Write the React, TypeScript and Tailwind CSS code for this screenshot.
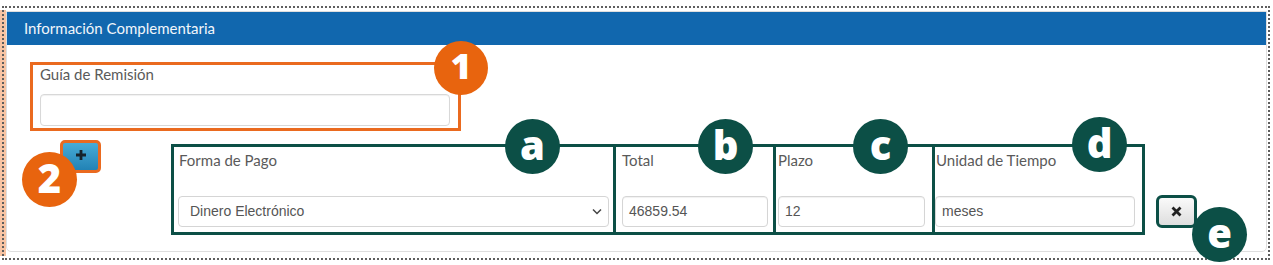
import React from "react";

const ORANGE = "bg-[#e8640e]";
const GREEN = "bg-[#0c4f46]";

function Badge({ label, x, y, color, size = 55, fs = "text-[40px]" }: { label: string; x: number; y: number; color: string; size?: number; fs?: string }) {
  return (
    <div
      className={`absolute rounded-full flex items-center justify-center text-white font-extrabold font-['Open_Sans',sans-serif] leading-none ${color} ${fs}`}
      style={{ left: x, top: y, width: size, height: size }}
    >
      <span className="-mt-[4px]">{label}</span>
    </div>
  );
}

function Field({ value, w }: { value: string; w: number }) {
  return (
    <div
      className="h-[31px] rounded-[4px] border border-[#d5d5d5] bg-white shadow-[inset_0_1px_1px_rgba(0,0,0,0.06)] flex items-center pl-[6px] text-[14px] text-[#555] font-['Liberation_Sans',sans-serif]"
      style={{ width: w }}
    >
      {value}
    </div>
  );
}

export default function App() {
  return (
    <div className="relative w-[1273px] h-[265px] bg-white overflow-hidden font-['Lato',sans-serif]">
      <div className="absolute left-0 top-[10px] w-[6px] h-[246px] bg-[#f8c4a3]" />
      <div className="relative ml-[2px] mt-[6px] w-[1268px] h-[254px] border-2 border-dotted border-[#5e5e5e]">
        <div className="ml-[2px] mt-[3px] w-[1261px] h-[241px] border border-[#dedede] rounded-b-[5px]">
          <div className="h-[33px] bg-[#1167ae] flex items-center pl-[17px] text-[#f2f6fb] text-[15px]">
            Información Complementaria
          </div>
          <div className="ml-[23px] mt-[17px] w-[431px] h-[69px] border-[3px] border-[#ea6a1f] pl-[7px] pt-[1px]">
            <div className="h-[16px] leading-[16px] text-[15px] text-[#5a5a5a]">Guía de Remisión</div>
            <div className="mt-[12px] w-[410px] h-[32px] rounded-[4px] border border-[#d8d8d8] bg-white shadow-[inset_0_1px_1px_rgba(0,0,0,0.06)]" />
          </div>
          <div className="mt-[9px] flex items-start">
            <div className="ml-[53px] w-[41px] h-[33px] rounded-[5px] border-[3px] border-[#ea6a1f] bg-gradient-to-b from-[#48acd6] to-[#2182b5] flex items-center justify-center">
              <svg width="12" height="12" viewBox="0 0 12 12" className="-mt-[3px]">
                <path d="M6 1v10M1 6h10" stroke="#16232b" strokeWidth="2.8" />
              </svg>
            </div>
            <div className="ml-[70px] mt-[4px] w-[974px] h-[91px] border-[3px] border-[#0c4f46] flex">
              <div className="w-[442px] h-full border-r-[3px] border-[#0c4f46] pl-[4px] pt-[5px]">
                <div className="h-[16px] leading-[16px] text-[15px] text-[#5a5a5a] pl-[1px]">Forma de Pago</div>
                <div className="mt-[28px] w-[431px] h-[31px] rounded-[4px] border border-[#d5d5d5] bg-white flex items-center justify-between pl-[11px] pr-[6px] text-[14px] text-[#555] font-['Liberation_Sans',sans-serif]">
                  <span>Dinero Electrónico</span>
                  <svg width="10" height="7" viewBox="0 0 10 7">
                    <path d="M1 1.5l4 4 4-4" stroke="#444" strokeWidth="1.5" fill="none" />
                  </svg>
                </div>
              </div>
              <div className="w-[160px] h-full border-r-[3px] border-[#0c4f46] pl-[6px] pt-[5px]">
                <div className="h-[16px] leading-[16px] text-[15px] text-[#5a5a5a]">Total</div>
                <div className="mt-[28px]">
                  <Field value="46859.54" w={146} />
                </div>
              </div>
              <div className="w-[159px] h-full border-r-[3px] border-[#0c4f46] pl-[2px] pt-[5px]">
                <div className="h-[16px] leading-[16px] text-[15px] text-[#5a5a5a]">Plazo</div>
                <div className="mt-[28px]">
                  <Field value="12" w={147} />
                </div>
              </div>
              <div className="w-[207px] h-full pt-[5px]">
                <div className="h-[16px] leading-[16px] text-[15px] text-[#5a5a5a] pl-[1px]">Unidad de Tiempo</div>
                <div className="mt-[28px]">
                  <Field value="meses" w={200} />
                </div>
              </div>
            </div>
            <div className="ml-[11px] mt-[55px] w-[41px] h-[33px] rounded-[6px] border-[3px] border-[#0c4f46] bg-gradient-to-b from-[#fafafa] to-[#dedede] flex items-center justify-center">
              <svg width="11" height="11" viewBox="0 0 11 11">
                <path d="M1.5 1.5l8 8M9.5 1.5l-8 8" stroke="#222" strokeWidth="2.8" />
              </svg>
            </div>
          </div>
        </div>
      </div>
      <Badge label="1" x={434} y={41} size={54} color={ORANGE} fs="text-[36px]" />
      <Badge label="2" x={22} y={152} color={ORANGE} />
      <Badge label="a" x={505} y={119} color={GREEN} />
      <Badge label="b" x={698} y={119} color={GREEN} />
      <Badge label="c" x={853} y={119} color={GREEN} />
      <Badge label="d" x={1072} y={117} color={GREEN} />
      <Badge label="e" x={1192} y={207} color={GREEN} />
    </div>
  );
}
